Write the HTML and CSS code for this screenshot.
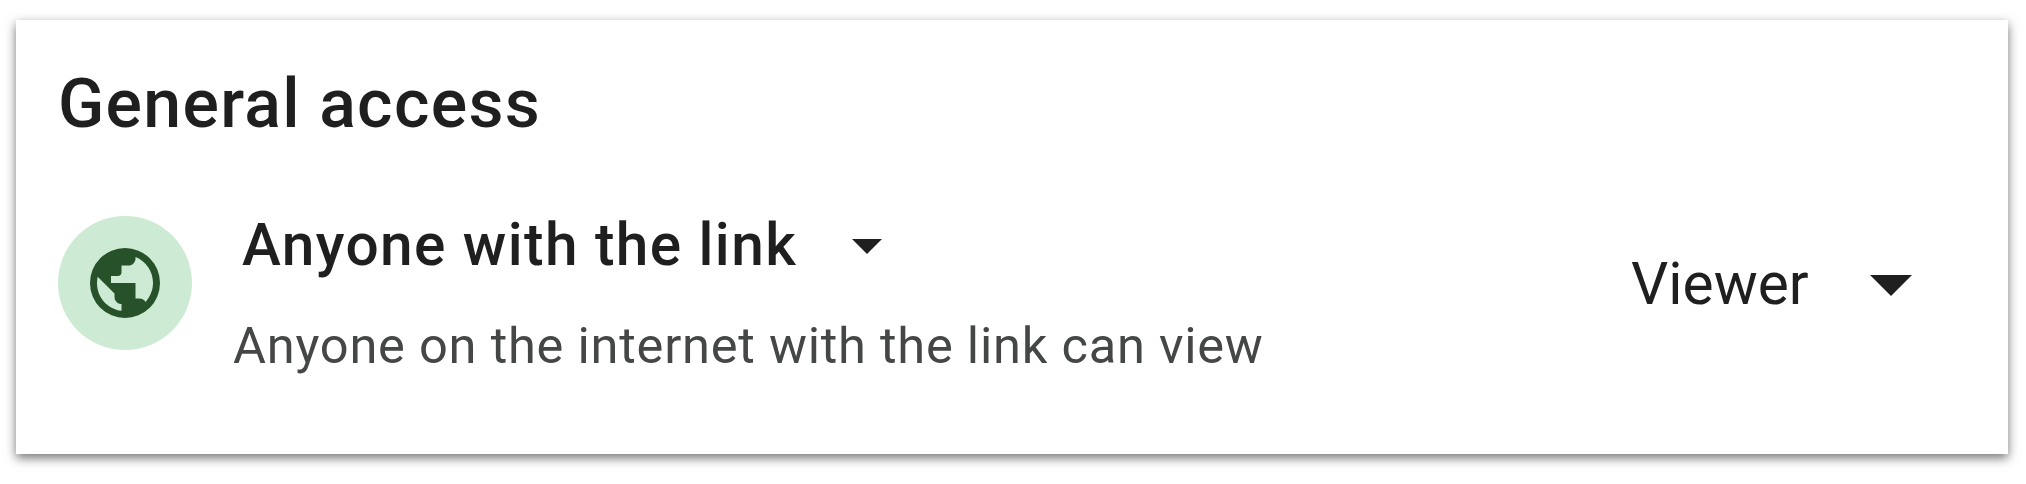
FILE: index.html
```
<!DOCTYPE html>
<html lang="en">
<head>
  <meta charset="UTF-8">
  <title>General access</title>
  <link rel="stylesheet" href="styles.css">
</head>
<body>
  <div class="card">
    <h2 class="title">General access</h2>

    <div class="access">
      <div class="avatar">
        <svg class="globe" viewBox="0 0 24 24">
          <path d="M12 2a10 10 0 1 0 0 20 10 10 0 0 0 0-20zm-1 17.95c-4-.5-7-3.85-7-7.95 0-.6.08-1.2.2-1.8L9 15v1c0 .55.2 1.02.59 1.41.39.39.86.59 1.41.59zm6.9-2.55c-.33-.6-.95-1-1.9-1H15V12H8v-2h2q.42 0 .71-.29T11 9V7h2c.55 0 1.02-.2 1.41-.59.39-.39.59-.86.59-1.41v-.4c3 1.2 5 4.1 5 7.4 0 2-.8 3.9-2.1 5.4z"/>
        </svg>
      </div>

      <div class="info">
        <div class="scope">
          <span class="scope-name">Anyone with the link</span>
          <svg class="scope-arrow" viewBox="0 0 30 15"><path d="M0 0h30L15 15z"/></svg>
        </div>
        <p class="description">Anyone on the internet with the link can view</p>
      </div>

      <div class="role">
        <span class="role-name">Viewer</span>
        <svg class="role-arrow" viewBox="0 0 42 21"><path d="M0 0h42L21 21z"/></svg>
      </div>
    </div>
  </div>
</body>
</html>
```
FILE: styles.css
```
* {
  box-sizing: border-box;
}

body {
  margin: 0;
  padding: 20px 18px 30px 16px;
  height: 484px;
  background-color: white;
  font-family: Roboto, "Open Sans", sans-serif;
  color: #1f1f1f;
}

.card {
  height: 434px;
  padding: 44px 96px 0 42px;
  background-color: white;
  box-shadow: 0 4px 10px rgba(0, 0, 0, 0.55);
}

.title {
  margin: 0;
  font-size: 68px;
  font-weight: 500;
  line-height: 80px;
  letter-spacing: 1.3px;
  white-space: nowrap;
}

.access {
  display: flex;
  margin-top: 52px;
}

.avatar {
  display: flex;
  align-items: center;
  justify-content: center;
  width: 134px;
  height: 134px;
  margin-top: 20px;
  border-radius: 50%;
  background-color: #cdebd4;
}

.globe {
  width: 84px;
  height: 84px;
  fill: #265129;
}

.info {
  margin-left: 41px;
}

.scope {
  display: flex;
  align-items: center;
  padding-left: 9px;
  height: 98px;
}

.scope-name {
  width: 610px;
  font-size: 58.6px;
  font-weight: 500;
  line-height: 70px;
  letter-spacing: 1.4px;
  white-space: nowrap;
}

.scope-arrow {
  width: 30px;
  height: 15px;
  margin-top: 3px;
  fill: #1f1f1f;
}

.description {
  margin: 22px 0 0;
  font-size: 50.6px;
  line-height: 60px;
  letter-spacing: 0.76px;
  color: #444746;
  white-space: nowrap;
}

.role {
  display: flex;
  align-items: center;
  height: 70px;
  margin-top: 53px;
  margin-left: auto;
}

.role-name {
  width: 239px;
  font-size: 58.6px;
  line-height: 70px;
}

.role-arrow {
  width: 42px;
  height: 21px;
  margin-top: 2px;
  fill: #1f1f1f;
}
```
